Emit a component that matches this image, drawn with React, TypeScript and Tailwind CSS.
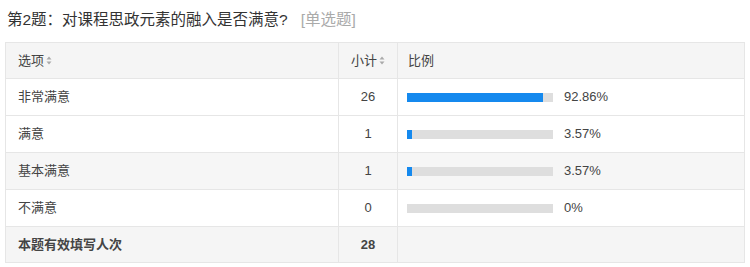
const rows = [
  { label: "非常满意", count: 26, pct: 92.86, text: "92.86%", bg: "bg-white" },
  { label: "满意", count: 1, pct: 3.57, text: "3.57%", bg: "bg-white" },
  { label: "基本满意", count: 1, pct: 3.57, text: "3.57%", bg: "bg-[#f6f6f6]" },
  { label: "不满意", count: 0, pct: 0, text: "0%", bg: "bg-white" },
];

const SortIcon = () => (
  <svg width="6" height="9" viewBox="0 0 6 9" className="ml-[2px] inline-block">
    <path d="M3 0.5 L5.5 3.5 L0.5 3.5 Z" fill="#aaa" />
    <path d="M3 8.5 L5.5 5.5 L0.5 5.5 Z" fill="#aaa" />
  </svg>
);

export default function App() {
  return (
    <div
      className="w-[750px] h-[267px] bg-white px-[5px] pt-[9px] text-[#444]"
      style={{ fontFamily: '"Liberation Sans", "Noto Sans CJK SC", sans-serif' }}
    >
      <div className="flex items-center h-[22px] pl-[2px] text-[15.5px] text-[#333]">
        <span>第2题：对课程思政元素的融入是否满意?</span>
        <span className="ml-[13px] text-[#aaa]">[单选题]</span>
      </div>

      <table className="mt-[11px] w-[740px] border-collapse text-[13px] table-fixed">
        <colgroup>
          <col className="w-[333px]" />
          <col className="w-[59px]" />
          <col />
        </colgroup>
        <thead>
          <tr className="h-[36px] bg-[#f5f5f5]">
            <th className="border border-[#e6e6e6] text-left font-normal pl-[12px]">
              <span className="inline-flex items-center">
                选项
                <SortIcon />
              </span>
            </th>
            <th className="border border-[#e6e6e6] text-center font-normal">
              <span className="inline-flex items-center">
                小计
                <SortIcon />
              </span>
            </th>
            <th className="border border-[#e6e6e6] text-left font-normal pl-[10px]">比例</th>
          </tr>
        </thead>
        <tbody>
          {rows.map((r) => (
            <tr key={r.label} className={`h-[37px] ${r.bg}`}>
              <td className="border border-[#e6e6e6] pl-[12px]">{r.label}</td>
              <td className="border border-[#e6e6e6] text-center">{r.count}</td>
              <td className="border border-[#e6e6e6] pl-[9px]">
                <div className="flex items-center">
                  <div className="w-[146px] h-[9px] bg-[#dedede]">
                    <div className="h-full bg-[#1589ee]" style={{ width: `${r.pct}%` }} />
                  </div>
                  <span className="ml-[11px]">{r.text}</span>
                </div>
              </td>
            </tr>
          ))}
          <tr className="h-[36px] bg-[#f5f5f5]">
            <td className="border border-[#e6e6e6] pl-[12px] font-bold">本题有效填写人次</td>
            <td className="border border-[#e6e6e6] text-center font-bold">28</td>
            <td className="border border-[#e6e6e6]"></td>
          </tr>
        </tbody>
      </table>
    </div>
  );
}
